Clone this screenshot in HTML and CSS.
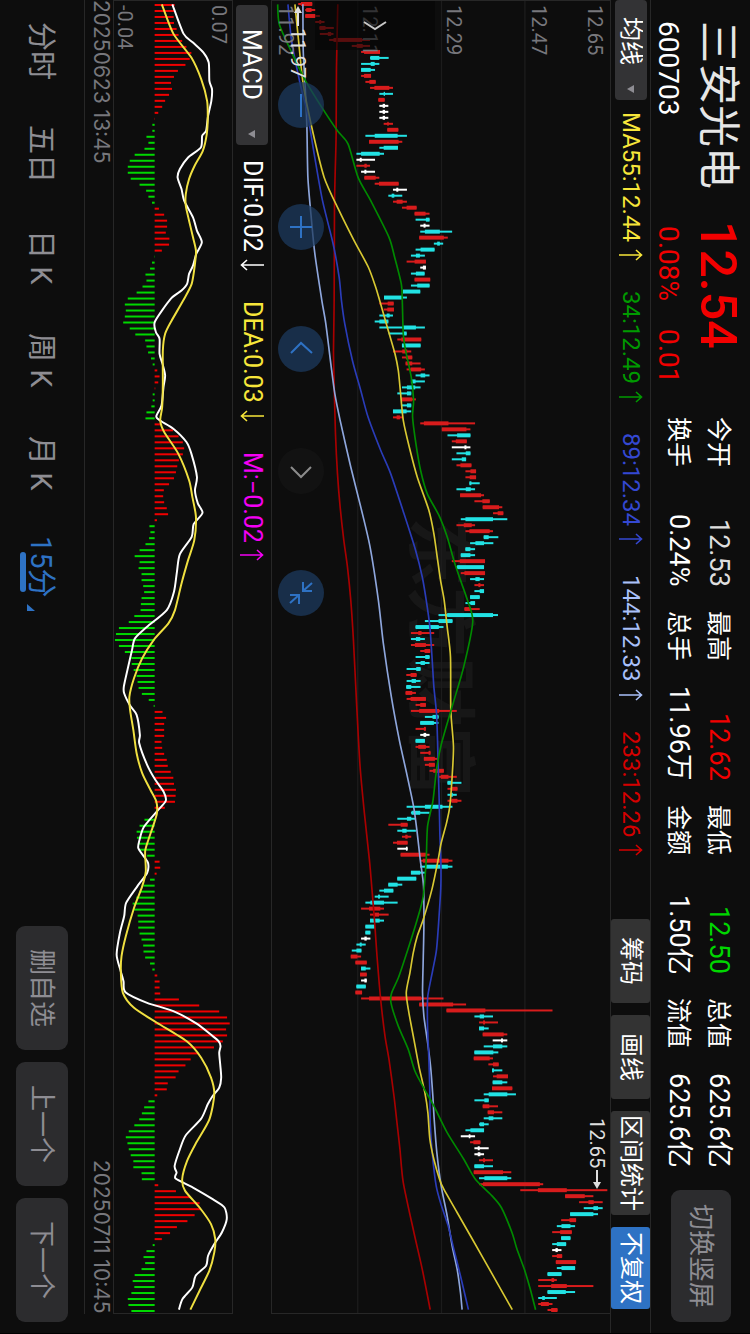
FILE: index.html
```html
<!DOCTYPE html>
<html lang="zh-CN">
<head>
<meta charset="utf-8">
<meta name="viewport" content="width=device-width, initial-scale=1">
<title>三安光电 600703</title>
<link rel="stylesheet" href="styles.css">
</head>
<body>
<svg class="defs" aria-hidden="true">
  <symbol id="up" viewBox="0 0 24 12"><path d="M0 6H22M17 1L22.500 6L17 11" stroke-width="1.6"/></symbol>
  <symbol id="down" viewBox="0 0 24 12"><path d="M24 6H2M7 1L1.500 6L7 11" stroke-width="1.6"/></symbol>
  <symbol id="caret" viewBox="0 0 8 8"><path d="M0 4L7 0V8Z"/></symbol>
</svg>
<main class="app">
  <header class="header">
    <div class="security">
      <h1 class="name">三安光电</h1>
      <div class="code">600703</div>
    </div>
    <div class="quote">
      <div class="price">12.54</div>
      <div class="change"><span>0.08%</span><span>0.01</span></div>
    </div>
    <dl class="stats">
      <div class="stat"><dt>今开</dt><dd class="soft">12.53</dd></div>
      <div class="stat"><dt>最高</dt><dd class="rise">12.62</dd></div>
      <div class="stat"><dt>最低</dt><dd class="fall">12.50</dd></div>
      <div class="stat"><dt>总值</dt><dd>625.6亿</dd></div>
      <div class="stat"><dt>换手</dt><dd>0.24%</dd></div>
      <div class="stat"><dt>总手</dt><dd>11.96万</dd></div>
      <div class="stat"><dt>金额</dt><dd>1.50亿</dd></div>
      <div class="stat"><dt>流值</dt><dd>625.6亿</dd></div>
    </dl>
    <button class="btn btn-rotate" type="button">切换竖屏</button>
  </header>

  <section class="bar bar-ma">
    <div class="picker picker-ma">
      <select aria-label="主图指标"><option>均线</option></select>
      <svg class="caret"><use href="#caret"/></svg>
    </div>
    <div class="legend">
      <span class="item ma55">MA55:12.44<svg class="arrow"><use href="#up"/></svg></span>
      <span class="item ma34">34:12.49<svg class="arrow"><use href="#up"/></svg></span>
      <span class="item ma89">89:12.34<svg class="arrow"><use href="#up"/></svg></span>
      <span class="item ma144">144:12.33<svg class="arrow"><use href="#up"/></svg></span>
      <span class="item ma233">233:12.26<svg class="arrow"><use href="#up"/></svg></span>
    </div>
    <div class="tools">
      <button class="tool" type="button">筹码</button>
      <button class="tool" type="button">画线</button>
      <button class="tool tool-wide" type="button">区间统计</button>
      <button class="tool tool-on" type="button">不复权</button>
    </div>
  </section>

  <section class="chart price-chart">
    <div class="watermark" aria-hidden="true">东方财富</div>
    <svg class="plot" id="price" viewBox="3 0 1017 3942" preserveAspectRatio="none"></svg>
    <span class="label p1">12.65</span>
    <span class="label p2">12.47</span>
    <span class="label p3">12.29</span>
    <span class="label p4">12.11</span>
    <span class="label p5">11.92</span>
    <span class="mark mark-high">12.65<svg class="tip" viewBox="0 0 10 20"><path d="M5 0V14"/><path class="head" d="M1 12H9L5 19Z"/></svg></span>
    <span class="mark mark-low"><svg class="tip" viewBox="0 0 10 20"><path d="M5 20V6"/><path class="head" d="M1 7H9L5 0Z"/></svg>11.97</span>
    <button class="drawer" type="button" aria-label="展开"><svg viewBox="0 0 24 10"><path d="M1 1L12 8L23 1"/></svg></button>
    <div class="controls">
      <button class="round" type="button" aria-label="缩小"><svg viewBox="0 0 46 46"><path d="M23 12V35"/></svg></button>
      <button class="round" type="button" aria-label="放大"><svg viewBox="0 0 46 46"><path d="M23 12V34M12 23H34"/></svg></button>
      <button class="round" type="button" aria-label="左移"><svg viewBox="0 0 46 46"><path d="M13 27L23 17L34 27"/></svg></button>
      <button class="round round-off" type="button" aria-label="右移"><svg viewBox="0 0 46 46"><path d="M13 19L23 29L33 19"/></svg></button>
      <button class="round" type="button" aria-label="收起"><svg viewBox="0 0 46 46"><path d="M25 12V21H34M25 21L34 13M12 25H21V34M21 25L12 33"/></svg></button>
    </div>
  </section>

  <section class="bar bar-macd">
    <div class="picker picker-macd">
      <select aria-label="副图指标"><option>MACD</option></select>
      <svg class="caret"><use href="#caret"/></svg>
    </div>
    <div class="legend">
      <span class="item dif">DIF:0.02<svg class="arrow"><use href="#down"/></svg></span>
      <span class="item dea">DEA:0.03<svg class="arrow"><use href="#down"/></svg></span>
      <span class="item macd">M:−0.02<svg class="arrow"><use href="#up"/></svg></span>
    </div>
  </section>

  <section class="chart macd-chart">
    <svg class="plot" id="macd" viewBox="339 0 360 3942" preserveAspectRatio="none"></svg>
    <span class="label m1">0.07</span>
    <span class="label m2">-0.04</span>
  </section>

  <div class="dates"><time>20250623 13:45</time><time>20250711 10:45</time></div>

  <footer class="footer">
    <nav class="tabs">
      <button class="tab" type="button">分时</button>
      <button class="tab" type="button">五日</button>
      <button class="tab" type="button">日 K</button>
      <button class="tab" type="button">周 K</button>
      <button class="tab" type="button">月 K</button>
      <button class="tab tab-on" type="button">15分<svg class="more" viewBox="0 0 8 7"><path d="M0 0L8 7H0Z"/></svg></button>
    </nav>
    <div class="actions">
      <button class="btn" type="button">删自选</button>
      <button class="btn" type="button">上一个</button>
      <button class="btn" type="button">下一个</button>
    </div>
  </footer>
</main>
<script src="chart.js"></script>
</body>
</html>
```
FILE: styles.css
```css
* {
  box-sizing: border-box;
}

html,
body {
  margin: 0;
  background: #0d0d0d;
}

.defs {
  display: block;
  width: 0;
  height: 0;
}

.app {
  writing-mode: vertical-rl;
  text-orientation: sideways;
  display: flex;
  flex-direction: column;
  width: 100vw;
  height: 100vh;
  overflow: hidden;
  border-inline-end: 1px solid #000;
  color: #fff;
  font: 24px/1 Roboto, "Noto Sans CJK SC", sans-serif;
  white-space: nowrap;
}

button,
select {
  writing-mode: inherit;
  text-orientation: inherit;
  appearance: none;
  margin: 0;
  padding: 0;
  border: 0;
  background: none;
  color: inherit;
  font: inherit;
  white-space: nowrap;
}

svg {
  display: block;
  overflow: visible;
  fill: none;
  stroke: currentColor;
}

/* Header */

.header {
  display: flex;
  flex: none;
  block-size: 100px;
  padding-inline: 21px 11px;
  border-block-end: 1px solid #272727;
}

.security {
  flex: none;
  inline-size: 200px;
  padding-block-start: 10px;
}

.quote {
  flex: none;
  inline-size: 196px;
  padding-block-start: 10px;
  color: #f20000;
}

.name {
  margin: 0;
  color: #e6e6e6;
  font-size: 42px;
  font-weight: 400;
  line-height: 44px;
}

.price {
  font-size: 50px;
  font-weight: 500;
  line-height: 44px;
}

.code,
.change {
  margin-block-start: 14px;
  font-size: 28px;
  line-height: 28px;
}

.change {
  display: flex;
  gap: 28px;
  padding-inline-start: 5px;
}

.stats {
  display: grid;
  flex: 1;
  grid-template-columns: repeat(4, 1fr);
  grid-auto-rows: 36px;
  gap: 4px 24px;
  margin: 0;
  padding-block-start: 14px;
}

.stat {
  display: flex;
  justify-content: space-between;
  align-items: center;
}

.stat dt {
  font-size: 25px;
}

.stat dd {
  margin: 0;
  font-size: 27px;
}

.soft { color: #dedede; }
.rise { color: #f20000; }
.fall { color: #00d600; }

.btn {
  inline-size: 124px;
  block-size: 52px;
  border-radius: 9px;
  background: #2c2c2e;
  color: #8e8d93;
  font-size: 26px;
}

.btn-rotate {
  align-self: center;
  inline-size: 132px;
  block-size: 60px;
  margin-inline-start: 22px;
}

/* Indicator bars */

.bar {
  display: flex;
  flex: none;
  align-items: center;
}

.bar-ma {
  block-size: 40px;
  border-block-end: 1px solid #272727;
  padding-inline-end: 24px;
}

.bar-macd {
  block-size: 38px;
  padding-inline-start: 5px;
  font-size: 25px;
}

.picker {
  position: relative;
  flex: none;
  block-size: 32px;
  border-radius: 4px;
  background: #333335;
}

.picker-ma {
  inline-size: 100px;
  margin-inline-end: 12px;
}

.picker-macd {
  inline-size: 140px;
  margin-inline-end: 15px;
}

.picker select {
  inline-size: 100%;
  block-size: 100%;
  padding-block-start: 4px;
  padding-inline-start: 17px;
}

.picker-macd select {
  padding-inline-start: 24px;
}

.caret {
  position: absolute;
  inset-inline-end: 7px;
  inset-block-start: 12px;
  width: 8px;
  height: 8px;
  fill: #8e8d93;
  stroke: none;
  pointer-events: none;
}

.legend {
  display: flex;
  flex: 1;
  gap: 30px;
}

.item {
  display: flex;
  align-items: center;
  gap: 7px;
}

.arrow {
  width: 24px;
  height: 12px;
}

.ma55 { color: #f7e63a; }
.ma34 { color: #009a00; }
.ma89 { color: #3448d2; }
.ma144 { color: #a9c0fa; }
.ma233 { color: #d40000; }
.dif { color: #fff; }
.dea { color: #f7e63a; }
.macd { color: #f400f4; }

.tools {
  display: flex;
  gap: 12px;
}

.tool {
  inline-size: 84px;
  block-size: 39px;
  border-radius: 3px;
  background: #333;
}

.tool-wide {
  inline-size: 104px;
}

.tool-on {
  inline-size: 82px;
  background: #2e72c4;
}

/* Charts */

.chart {
  position: relative;
  margin-inline-end: 19px;
  border: 1px solid #272727;
}

.price-chart {
  flex: 1;
  border-block-start: 0;
}

.macd-chart {
  flex: none;
  block-size: 120px;
}

.plot {
  position: absolute;
  inset: 0;
  width: 100%;
  height: 100%;
}

.watermark {
  position: absolute;
  inset-block-start: 136px;
  inset-inline-start: 516px;
  color: #171717;
  font-size: 70px;
  font-weight: 700;
}

.label,
.mark {
  position: absolute;
  inset-inline-start: 4px;
  color: #77777c;
  font-size: 20px;
  line-height: 20px;
}

.p1 { inset-block-start: 5px; }
.p2 { inset-block-start: 61px; }
.p3 { inset-block-start: 146px; }
.p4 { inset-block-start: 230px; }
.p5 { inset-block-end: 4px; }
.m1 { inset-block-start: 3px; }
.m2 { inset-block-end: 1px; }

.mark {
  display: flex;
  align-items: center;
  gap: 2px;
  color: #dedede;
}

.mark-high {
  inset-block-start: 3px;
  inset-inline-start: 1117px;
}

.mark-low {
  inset-block-end: 16px;
  inset-inline-start: 5px;
}

.tip {
  width: 10px;
  height: 20px;
  stroke-width: 2;
}

.head {
  fill: currentColor;
  stroke: none;
}

.drawer {
  position: absolute;
  inset-block-end: 43px;
  inset-inline-start: 0;
  display: grid;
  place-items: center;
  inline-size: 49px;
  block-size: 120px;
  background: rgba(5, 5, 5, 0.6);
  color: #c8c8c8;
}

.drawer svg {
  width: 24px;
  height: 10px;
  stroke-width: 2;
}

.controls {
  position: absolute;
  inset-block-end: 6px;
  inset-inline-start: 81px;
  display: flex;
  gap: 76px;
}

.round {
  inline-size: 46px;
  block-size: 46px;
  border-radius: 50%;
  background: rgba(28, 58, 93, 0.75);
  color: #2e72c4;
}

.round-off {
  background: rgba(20, 20, 20, 0.8);
  color: #8c8c8c;
}

.round svg {
  width: 46px;
  height: 46px;
  stroke-width: 2;
}

.dates {
  display: flex;
  flex: none;
  justify-content: space-between;
  block-size: 29px;
  margin-inline-end: 19px;
  border-block-end: 1px solid #272727;
  color: #77777c;
  font-family: Inter, sans-serif;
  font-size: 21px;
  line-height: 24px;
}

/* Footer */

.footer {
  display: flex;
  flex: none;
  justify-content: space-between;
  padding-block: 16px;
  padding-inline-end: 11px;
}

.tabs,
.actions {
  display: flex;
}

.actions {
  gap: 12px;
}

.tab {
  position: relative;
  inline-size: 103px;
  block-size: 52px;
  padding-block-start: 4px;
  color: #8e8d93;
  font-size: 29px;
}

.tab-on {
  color: #2e72c4;
}

.tab-on::after {
  content: "";
  position: absolute;
  inset-block-end: 4px;
  inset-inline-start: 37px;
  inline-size: 40px;
  block-size: 6px;
  border-radius: 3px;
  background: #2e72c4;
}

.more {
  position: absolute;
  inset-block-end: 11px;
  inset-inline-start: 89px;
  width: 8px;
  height: 7px;
  fill: currentColor;
  stroke: none;
}
```
FILE: chart.js
```js
// Candles: colour, low, body low, body high, high.
const CANDLES = `r 82 90 124 124;r 103 106 122 134;r 103 103 134 147;r 133 145 151 161;r 146 146 164 189;r 147 171 181 188;r 175 188 274 298;r 243 258 276 298;r 271 280 328 328;c 298 299 326 354;
c 271 300 312 326;c 271 271 300 313;r 271 280 301 301;r 284 296 315 315;r 298 311 356 367;c 326 339 343 367;r 323 323 342 342;w 326 336 343 353;w 326 336 343 353;w 326 336 343 353;
r 339 350 354 367;r 350 350 383 383;c 284 312 381 409;r 295 295 384 395;c 326 339 382 382;c 257 271 327 340;w 257 267 273 313;r 257 281 288 298;w 271 281 287 313;r 281 281 315 326;
r 312 325 384 384;w 367 377 383 409;c 353 363 371 395;r 367 378 396 409;r 394 408 438 438;r 432 432 465 477;c 435 466 477 477;w 449 459 465 477;c 449 463 508 545;r 446 446 520 532;
c 490 500 508 518;c 435 450 492 492;c 421 436 448 463;r 408 432 466 466;w 449 457 466 466;c 421 436 462 462;r 432 432 479 479;c 421 440 477 477;c 397 397 449 449;c 340 340 394 409;
r 326 351 369 369;r 339 350 370 370;c 326 348 357 367;c 312 326 353 353;c 326 397 436 463;c 354 397 408 408;r 380 392 452 452;c 394 394 450 450;r 367 395 410 422;r 394 406 425 425;
r 405 405 425 450;r 408 420 452 463;c 435 450 464 477;c 421 421 435 463;c 394 409 434 450;c 380 409 422 422;r 392 392 425 436;c 394 409 422 422;c 367 367 408 422;r 367 378 388 397;
r 449 460 534 614;r 514 514 588 600;c 531 560 600 600;r 544 556 589 589;w 544 582 588 600;c 558 586 600 600;c 544 574 587 587;r 558 570 603 603;r 585 600 617 617;r 585 598 617 617;
c 597 597 603 628;c 558 586 601 614;r 569 569 632 641;r 612 636 658 658;r 637 637 686 696;r 668 682 699 699;c 571 585 668 711;r 558 580 604 614;r 585 597 658 668;c 640 640 655 684;
c 599 615 641 669;c 585 585 600 614;c 571 571 600 614;r 544 568 644 644;c 558 560 641 641;r 571 582 644 644;c 599 615 628 641;r 612 624 630 641;c 612 628 641 641;c 599 599 628 628;
c 585 600 614 614;r 582 582 600 628;c 504 530 668 683;c 463 504 546 546;c 435 435 505 519;r 421 443 453 491;c 421 436 449 463;r 421 433 466 491;r 449 462 479 479;c 435 464 477 477;
c 435 450 463 477;c 408 437 450 450;r 407 420 438 438;c 408 423 436 450;c 407 407 422 450;r 405 405 425 436;r 408 420 466 466;r 435 449 466 466;r 421 446 506 559;c 463 486 504 504;
c 449 449 490 504;r 435 460 466 466;w 449 459 467 477;c 435 435 463 463;r 435 443 466 477;r 449 474 480 480;r 460 460 493 505;r 463 475 493 493;r 477 488 520 520;r 504 511 534 559;
c 531 531 545 573;r 531 542 561 561;c 531 541 547 559;r 531 543 561 573;c 408 463 516 546;c 421 423 449 477;c 380 409 422 436;r 353 390 411 411;c 380 395 408 436;r 394 404 411 422;
r 367 379 411 411;w 380 406 411 411;r 390 390 466 477;r 449 457 534 546;c 449 463 532 546;c 421 421 449 463;c 380 380 437 437;c 353 353 381 395;c 326 340 368 368;c 312 322 328 354;
c 284 299 340 381;r 271 295 329 340;r 298 311 325 354;c 298 298 327 340;c 284 284 312 312;c 284 284 299 299;w 271 281 288 299;c 257 267 273 285;c 243 257 272 272;r 240 240 260 271;
r 254 254 288 288;c 271 271 285 299;r 268 268 288 288;w 271 281 288 288;c 257 257 285 285;r 254 254 274 274;r 271 295 452 519;r 446 446 548 587;r 528 528 645 847;c 612 628 641 668;
r 626 638 644 683;c 626 626 641 655;r 637 637 700 711;w 667 692 698 711;c 640 668 696 711;c 612 612 669 684;r 610 610 658 668;r 654 668 685 685;c 665 665 671 696;r 668 679 713 713;
c 667 667 696 711;r 665 665 726 726;c 640 655 711 737;c 612 642 655 655;r 637 637 657 683;r 652 652 671 696;c 640 655 669 696;c 626 628 641 655;c 585 600 641 641;w 571 595 600 614;
r 599 609 630 630;w 612 622 628 655;w 612 622 630 641;r 626 638 644 668;c 612 612 641 668;r 610 610 698 723;c 626 642 711 723;r 626 638 809 819;r 750 803 890 1012;r 885 885 944 970;
r 927 955 971 998;c 941 970 984 998;c 900 900 970 984;r 873 898 918 918;c 860 874 901 915;r 846 870 905 905;c 873 873 901 901;c 846 860 888 888;w 846 856 863 874;r 846 860 876 876;
r 857 857 918 918;c 860 874 915 915;c 832 832 874 874;r 804 844 852 860;r 804 843 890 970;c 832 832 887 915;c 804 816 824 860;r 804 812 836 847;r 832 843 862 862`;

// Moving averages as value,time pairs.
const AVERAGES = [
  ['#a80000', '201,10 197,200 196,400 193,520 191,620 190,900 188,1050 190,1150 194,1300 200,1420 208,1520 219,1620 230,1700 240,1800 248,1920 258,2120 268,2300 281,2440 296,2580 303,2660 312,2770 319,2870 330,3000 343,3110 355,3180 370,3290 379,3370 388,3450 398,3550 430,3700 455,3810 479,3932'],
  ['#8ea6dc', '96,10 97,150 103,260 108,380 111,530 121,650 132,760 153,900 165,970 180,1090 192,1180 208,1260 240,1400 270,1520 298,1640 323,1800 338,1930 362,2090 386,2220 408,2320 429,2420 440,2500 449,2580 459,2660 460,2780 458,2880 456,2980 460,3050 470,3120 480,3200 487,3290 491,3360 499,3460 512,3560 530,3650 545,3740 560,3810 570,3880 575,3932'],
  ['#2a3cb8', '51,10 62,120 88,250 110,340 130,460 155,600 187,730 205,830 212,900 222,970 245,1080 270,1170 292,1250 330,1350 360,1420 400,1540 435,1650 455,1730 467,1800 478,1880 485,1980 490,2060 498,2140 501,2220 503,2300 506,2400 508,2500 511,2580 511,2660 505,2760 498,2850 487,2910 475,2970 471,3000 471,3080 475,3180 478,3280 479,3370 485,3460 497,3560 513,3620 533,3680 550,3750 570,3830 594,3932'],
  ['#d8c832', '72,10 82,110 97,250 125,390 160,530 205,630 250,720 293,800 315,860 327,900 350,980 373,1060 383,1110 390,1180 398,1260 416,1340 440,1430 475,1530 490,1600 500,1670 510,1740 521,1800 530,1880 540,1970 541,2130 549,2240 545,2330 538,2420 528,2470 512,2530 503,2580 484,2670 458,2760 440,2810 428,2860 418,2920 407,2980 415,3040 430,3120 445,3200 463,3280 472,3340 478,3420 490,3480 507,3540 520,3570 560,3640 640,3780 726,3932'],
  ['#008a00', '20,10 25,70 60,150 104,240 150,315 200,390 232,430 262,530 300,600 355,710 372,770 392,850 395,900 398,1000 405,1050 422,1130 429,1200 426,1250 436,1330 450,1410 470,1480 505,1545 530,1610 550,1680 570,1740 591,1800 607,1865 580,2000 545,2120 512,2235 498,2310 487,2405 471,2480 467,2580 458,2690 440,2760 415,2840 385,2930 363,2980 361,3010 383,3080 413,3150 433,3215 462,3270 490,3320 530,3400 580,3480 615,3540 665,3590 693,3625 725,3700 740,3750 762,3810 780,3870 796,3932'],
];

// MACD histogram ends, one per period, measured on the same axis as the lines.
const ZERO = 463;
const HISTOGRAM = [
  524, 522, 521, 522, 530, 536, 547, 560, 575, 570, 557, 534, 522, 513, 516, 507, 495, 486, 474, 464, 456, 456, 438, 444, 432, 402, 387, 381, 381, 390,
  417, 437, 444, 455, 476, 492, 501, 501, 497, 508, 507, 485, 462, 455, 449, 435, 438, 426, 408, 381, 372, 375, 372, 367, 387, 404, 434, 438, 443, 452,
  457, 471, 478, 474, 465, 457, 457, 453, 438, 435, 480, 519, 536, 549, 553, 549, 537, 532, 528, 522, 507, 491, 489, 492, 500, 504, 470, 447, 450, 446,
  435, 417, 402, 417, 414, 423, 423, 428, 431, 423, 421, 420, 401, 384, 354, 345, 342, 354, 372, 392, 393, 399, 408, 411, 414, 424, 445, 460, 487, 498,
  492, 492, 492, 484, 486, 492, 500, 503, 512, 520, 522, 528, 527, 525, 494, 467, 432, 417, 408, 409, 414, 417, 440, 478, 480, 469, 449, 429, 417, 407,
  396, 401, 411, 413, 413, 417, 423, 428, 429, 434, 449, 456, 471, 478, 478, 480, 537, 599, 660, 684, 692, 681, 684, 671, 644, 596, 573, 557, 536, 527,
  503, 500, 471, 444, 431, 424, 416, 401, 384, 375, 380, 384, 390, 398, 398, 423, 424, 474, 528, 571, 600, 604, 585, 563, 531, 510, 485, 457, 438, 429,
  434, 423, 402, 396, 401, 392, 381, 383, 392,
];

const DIF = '517,10 551,98 580,125 612,155 628,185 630,240 638,265 636,300 626,345 620,390 608,405 604,440 565,470 540,505 533,530 545,565 553,600 580,650 592,690 607,725 590,760 580,795 568,820 562,850 545,870 512,895 464,963 467,995 478,1015 478,1060 487,1090 495,1125 490,1160 484,1215 468,1248 482,1262 520,1285 560,1325 575,1360 592,1430 586,1470 595,1510 609,1538 582,1572 576,1610 540,1662 531,1715 522,1775 500,1830 440,1880 403,1915 394,1950 380,2010 369,2060 370,2080 388,2117 408,2145 418,2205 416,2230 440,2295 465,2340 490,2375 497,2403 470,2435 430,2482 417,2520 413,2545 430,2570 443,2590 440,2620 410,2660 376,2710 370,2750 357,2800 347,2865 358,2910 368,2945 374,2978 440,3010 520,3035 590,3072 640,3110 658,3125 664,3140 660,3160 663,3195 666,3235 660,3265 640,3290 625,3315 605,3358 558,3408 540,3450 524,3500 530,3520 527,3538 580,3565 640,3600 676,3625 683,3660 668,3700 645,3735 626,3770 620,3800 588,3830 578,3865 548,3900 537,3932';
const DEA = '485,10 520,98 575,170 605,235 623,300 625,350 622,400 610,450 585,495 568,535 558,580 558,615 568,660 580,710 589,750 586,790 576,850 550,900 515,960 495,1000 488,1050 488,1150 486,1220 480,1260 492,1295 535,1360 568,1440 578,1490 589,1550 584,1620 565,1680 545,1750 525,1830 505,1870 460,1920 425,1975 400,2035 386,2090 388,2130 398,2190 408,2260 425,2320 450,2370 468,2405 470,2440 458,2480 444,2520 434,2555 436,2615 425,2660 400,2725 375,2810 362,2870 360,2920 366,2980 400,3025 470,3070 560,3125 605,3175 635,3235 645,3285 630,3360 590,3430 562,3485 547,3540 556,3575 600,3625 635,3675 648,3720 645,3760 630,3815 600,3875 572,3932';

const COLORS = { r: '#d81c1c', c: '#22e2e4', w: '#fff' };
const STEP = 18;

const rect = (x, y, w, h, fill) =>
  `<rect x="${x}" y="${y}" width="${w}" height="${h}" fill="${fill}" stroke="none"/>`;

// Catmull-Rom spline through the points, written as cubic segments.
function curve(text, color, width) {
  const p = text.split(' ').map((s) => s.split(',').map(Number));
  let d = `M${p[0]}`;
  for (let i = 0; i < p.length - 1; i++) {
    const a = p[i - 1] || p[i];
    const b = p[i];
    const c = p[i + 1];
    const e = p[i + 2] || c;
    d += `C${b[0] + (c[0] - a[0]) / 8} ${b[1] + (c[1] - a[1]) / 8} ` +
      `${c[0] - (e[0] - b[0]) / 8} ${c[1] - (e[1] - b[1]) / 8} ${c[0]} ${c[1]}`;
  }
  return `<path d="${d}" stroke="${color}" stroke-width="${width}"/>`;
}

let price = [261, 513, 764].map((x) => rect(x - 2, 0, 4, 3942, '#1c1c1c')).join('');
CANDLES.split(';').forEach((row, i) => {
  const [key, ...values] = row.trim().split(' ');
  const [low, from, to, high] = values.map(Number);
  const y = 9 + i * STEP;
  price += rect(low, y - 3, high - low, 6, COLORS[key]);
  price += rect(from, y - 6, to - from, 12, COLORS[key]);
});
price += AVERAGES.map(([color, points]) => curve(points, color, 5)).join('');
document.getElementById('price').innerHTML = price;

let macd = HISTOGRAM.map((end, i) =>
  rect(Math.min(end, ZERO), 9 + i * STEP, Math.abs(end - ZERO), 6, end > ZERO ? '#f00000' : '#00d800')
).join('');
macd += curve(DIF, '#fff', 6) + curve(DEA, '#f0e040', 6);
document.getElementById('macd').innerHTML = macd;
```
